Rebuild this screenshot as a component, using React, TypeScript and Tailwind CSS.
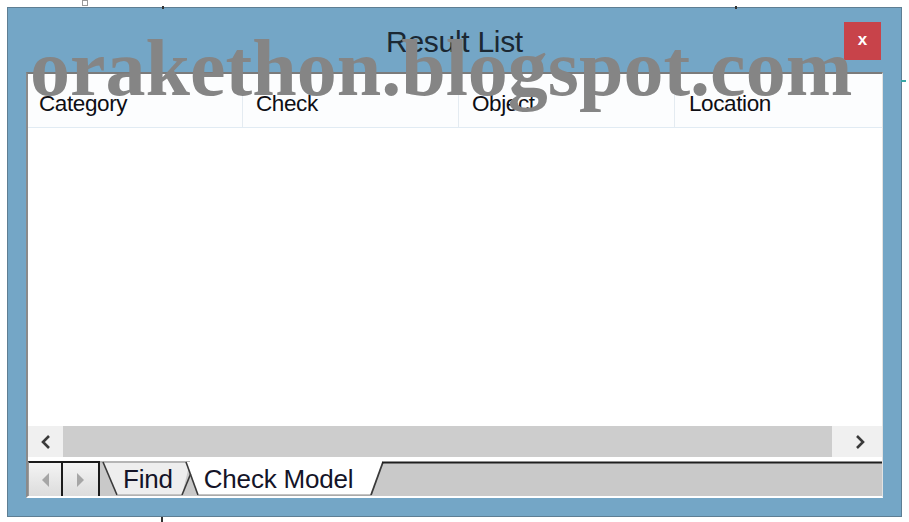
import React from "react";

const Chevron = ({ dir }: { dir: "left" | "right" }) => (
  <svg width="12" height="16" viewBox="0 0 12 16">
    <polyline
      points={dir === "left" ? "9,2 3,8 9,14" : "3,2 9,8 3,14"}
      fill="none"
      stroke="#3a3a3a"
      strokeWidth="2.6"
    />
  </svg>
);

const Tri = ({ dir }: { dir: "left" | "right" }) => (
  <svg width="9" height="16" viewBox="0 0 9 16">
    <polygon points={dir === "left" ? "8,1 1,8 8,15" : "1,1 8,8 1,15"} fill="#a6a6a6" />
  </svg>
);

export default function App() {
  const cols = ["Category", "Check", "Object", "Location"];
  return (
    <div
      className="relative w-[909px] h-[522px] bg-white overflow-hidden pt-[7px] pl-[7px]"
      style={{ fontFamily: '"Liberation Sans", Arial, sans-serif' }}
    >
      {/* window */}
      <div className="w-[895px] h-[510px] border border-[#5e7e93] bg-[#74a6c6] flex flex-col">
        {/* title bar */}
        <div className="h-[64px] grid grid-cols-[1fr_auto_1fr]">
          <div />
          <div className="self-center pt-[3px] text-[30px] leading-none text-[#1b2833] tracking-[-0.3px]">
            Result List
          </div>
          <div className="flex justify-end items-start pt-[14px] pr-[20px]">
            <div className="w-[37px] h-[38px] bg-[#c8434a] flex items-center justify-center text-white font-bold text-[17px] leading-none pb-[3px]">
              x
            </div>
          </div>
        </div>
        {/* panel */}
        <div className="ml-[18px] w-[857px] h-[426px] bg-white border-t-2 border-l-2 border-t-[#7b7b7b] border-l-[#8a8a8a] border-r border-r-[#e2e2e2] border-b-2 border-b-white flex flex-col">
          {/* header */}
          <div className="h-[54px] flex bg-[#fcfdfe] border-b border-[#e1ebf3]">
            {cols.map((c, i) => (
              <div
                key={c}
                className={
                  "h-full flex items-center pt-[7px] text-[22.5px] text-[#0e0e14] tracking-[-0.4px] " +
                  (i === 0
                    ? "w-[215px] pl-[11px] border-r border-[#e4ebf1]"
                    : i === 3
                    ? "flex-1 pl-[14px]"
                    : "w-[216px] pl-[13px] border-r border-[#e4ebf1]")
                }
              >
                {c}
              </div>
            ))}
          </div>
          {/* body */}
          <div className="flex-1 bg-white" />
          {/* horizontal scrollbar */}
          <div className="h-[31px] flex bg-[#f0f0f0]">
            <div className="w-[35px] flex items-center justify-center">
              <Chevron dir="left" />
            </div>
            <div className="flex-1 bg-[#cdcdcd]" />
            <div className="w-[50px] flex items-center justify-center pl-[6px]">
              <Chevron dir="right" />
            </div>
          </div>
          {/* sheet tabs */}
          <div className="h-[39px] pt-[4px] flex bg-white">
            <div className="w-[35px] h-[35px] border-t-2 border-r-2 border-[#1c1c1c] border-l border-l-[#9a9a9a] bg-gradient-to-b from-[#f4f4f4] to-[#dcdcdc] flex items-center justify-center">
              <Tri dir="left" />
            </div>
            <div className="w-[37px] h-[35px] border-t-2 border-r-2 border-[#1c1c1c] bg-gradient-to-b from-[#f4f4f4] to-[#dcdcdc] flex items-center justify-center">
              <Tri dir="right" />
            </div>
            <div className="relative flex-1 h-[35px]">
              <svg className="absolute inset-0" width="782" height="35" viewBox="0 0 782 35">
                <rect x="0" y="1" width="782" height="34" fill="#c9c9c9" />
                <polygon points="3,1 17,34 82,34 90,1" fill="#eeeeee" />
                <line x1="0" y1="1" x2="90" y2="1" stroke="#b5b5b5" strokeWidth="2" />
                <line x1="3" y1="1" x2="17" y2="34" stroke="#3a3a3a" strokeWidth="1.6" />
                <line x1="17" y1="34" x2="82" y2="34" stroke="#9a9a9a" strokeWidth="1.2" />
                <polygon points="86,1 98,34 271,34 283,1" fill="#ffffff" />
                <line x1="82" y1="34" x2="90.6" y2="13" stroke="#3a3a3a" strokeWidth="1.6" />
                <line x1="86" y1="1" x2="98" y2="34" stroke="#3a3a3a" strokeWidth="1.6" />
                <line x1="98" y1="34" x2="271" y2="34" stroke="#8a8a8a" strokeWidth="1.2" />
                <line x1="283" y1="1" x2="271" y2="34" stroke="#3a3a3a" strokeWidth="1.8" />
                <line x1="282" y1="1.5" x2="782" y2="1.5" stroke="#1e1e1e" strokeWidth="2.2" />
              </svg>
              <div className="relative h-full flex items-center text-[26px] leading-none text-[#141428] tracking-[-0.2px] pt-[1px]">
                <span className="ml-[23px]">Find</span>
                <span className="ml-[31px]">Check Model</span>
              </div>
            </div>
          </div>
        </div>
      </div>

      {/* watermark */}
      <div
        className="absolute left-[30px] top-[28px] text-[80px] leading-[80px] font-bold text-[#858585] whitespace-nowrap pointer-events-none"
        style={{ fontFamily: '"Liberation Serif", "Times New Roman", serif' }}
      >
        orakethon.blogspot.com
      </div>

      {/* small stray marks */}
      <div className="absolute left-[82px] top-0 w-[6px] h-[6px] border border-[#9a9a9a] bg-white" />
      <div className="absolute left-[162px] top-[6px] w-[2px] h-[3px] bg-[#333]" />
      <div className="absolute left-[735px] top-[6px] w-[2px] h-[3px] bg-[#333]" />
      <div className="absolute left-[161px] top-[517px] w-[2px] h-[5px] bg-[#333]" />
      <div className="absolute left-[901px] top-[80px] w-[5px] h-[2px] bg-[#3aa6a6]" />
    </div>
  );
}
